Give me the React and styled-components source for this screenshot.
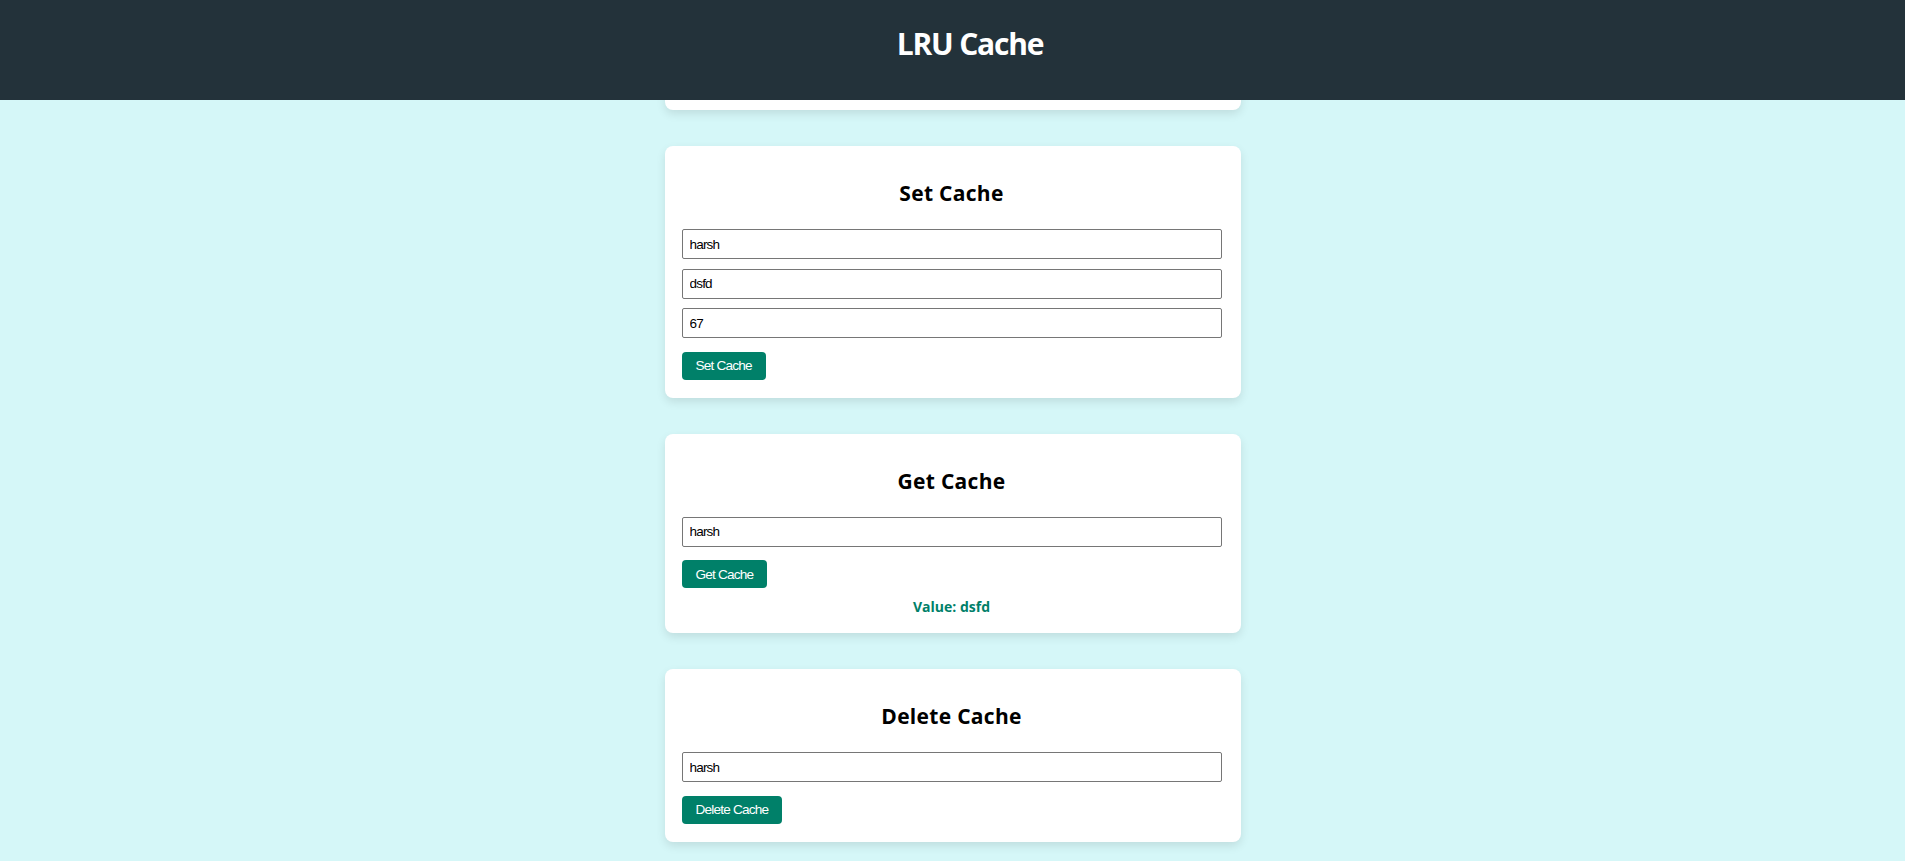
import React, { useState } from "react";
import styled, { createGlobalStyle } from "styled-components";

const GlobalStyle = createGlobalStyle`
  * {
    box-sizing: border-box;
  }
  body {
    margin: 0;
    background: #d5f7f8;
    font-family: "Liberation Sans", Arial, sans-serif;
  }
`;

const Header = styled.header`
  position: fixed;
  top: 0;
  left: 0;
  right: 0;
  z-index: 10;
  height: 100px;
  padding: 24px 0 0 35px;
  background: #23323a;
  text-align: center;
`;

const AppTitle = styled.h1`
  margin: 0;
  font-family: "Open Sans", sans-serif;
  font-size: 30px;
  line-height: 40px;
  font-weight: 700;
  letter-spacing: -1.2px;
  color: #ffffff;
`;

const Main = styled.main`
  display: flex;
  flex-direction: column;
  align-items: center;
  gap: 36px;
  padding: 9px 0 16px;
`;

const Card = styled.section`
  width: 576px;
  padding: 16px 19px 18px 17px;
  background: #ffffff;
  border-radius: 8px;
  box-shadow: 0 4px 10px rgba(0, 0, 0, 0.1);
`;

/* the list card sits mostly under the fixed header */
const ListBody = styled.div`
  height: 67px;
`;

const CardTitle = styled.h2`
  margin: 17px 0 22px;
  font-family: "Open Sans", sans-serif;
  font-size: 21px;
  line-height: 28px;
  font-weight: 700;
  letter-spacing: 0.3px;
  text-align: center;
  color: #000000;
`;

const Form = styled.div`
  display: flex;
  flex-direction: column;
  align-items: flex-start;
  gap: 9.5px;
`;

const Input = styled.input`
  width: 100%;
  height: 30px;
  padding: 0 7px;
  border: 1px solid #767676;
  border-radius: 2px;
  font-family: "Liberation Sans", Arial, sans-serif;
  font-size: 13.5px;
  letter-spacing: -0.8px;
  color: #000000;
  background: #ffffff;
  outline: none;
`;

const Button = styled.button`
  height: 28px;
  margin-top: 4px;
  padding: 0 14px;
  border: none;
  border-radius: 4px;
  background: #008069;
  color: #ffffff;
  font-family: "Liberation Sans", Arial, sans-serif;
  font-size: 13.6px;
  letter-spacing: -0.8px;
  cursor: pointer;
`;

const Value = styled.p`
  margin: 10px 0 0;
  font-family: "Open Sans", sans-serif;
  font-size: 14px;
  line-height: 17px;
  font-weight: 700;
  text-align: center;
  color: #008069;
`;

export default function App() {
  const [setKey, setSetKey] = useState("harsh");
  const [setVal, setSetVal] = useState("dsfd");
  const [expiry, setExpiry] = useState("67");
  const [getKey, setGetKey] = useState("harsh");
  const [delKey, setDelKey] = useState("harsh");

  return (
    <>
      <GlobalStyle />
      <Header>
        <AppTitle>LRU Cache</AppTitle>
      </Header>
      <Main>
        <Card>
          <ListBody />
        </Card>

        <Card>
          <CardTitle>Set Cache</CardTitle>
          <Form>
            <Input value={setKey} onChange={(e) => setSetKey(e.target.value)} />
            <Input value={setVal} onChange={(e) => setSetVal(e.target.value)} />
            <Input value={expiry} onChange={(e) => setExpiry(e.target.value)} />
            <Button>Set Cache</Button>
          </Form>
        </Card>

        <Card>
          <CardTitle>Get Cache</CardTitle>
          <Form>
            <Input value={getKey} onChange={(e) => setGetKey(e.target.value)} />
            <Button>Get Cache</Button>
          </Form>
          <Value>Value: dsfd</Value>
        </Card>

        <Card>
          <CardTitle>Delete Cache</CardTitle>
          <Form>
            <Input value={delKey} onChange={(e) => setDelKey(e.target.value)} />
            <Button>Delete Cache</Button>
          </Form>
        </Card>
      </Main>
    </>
  );
}
